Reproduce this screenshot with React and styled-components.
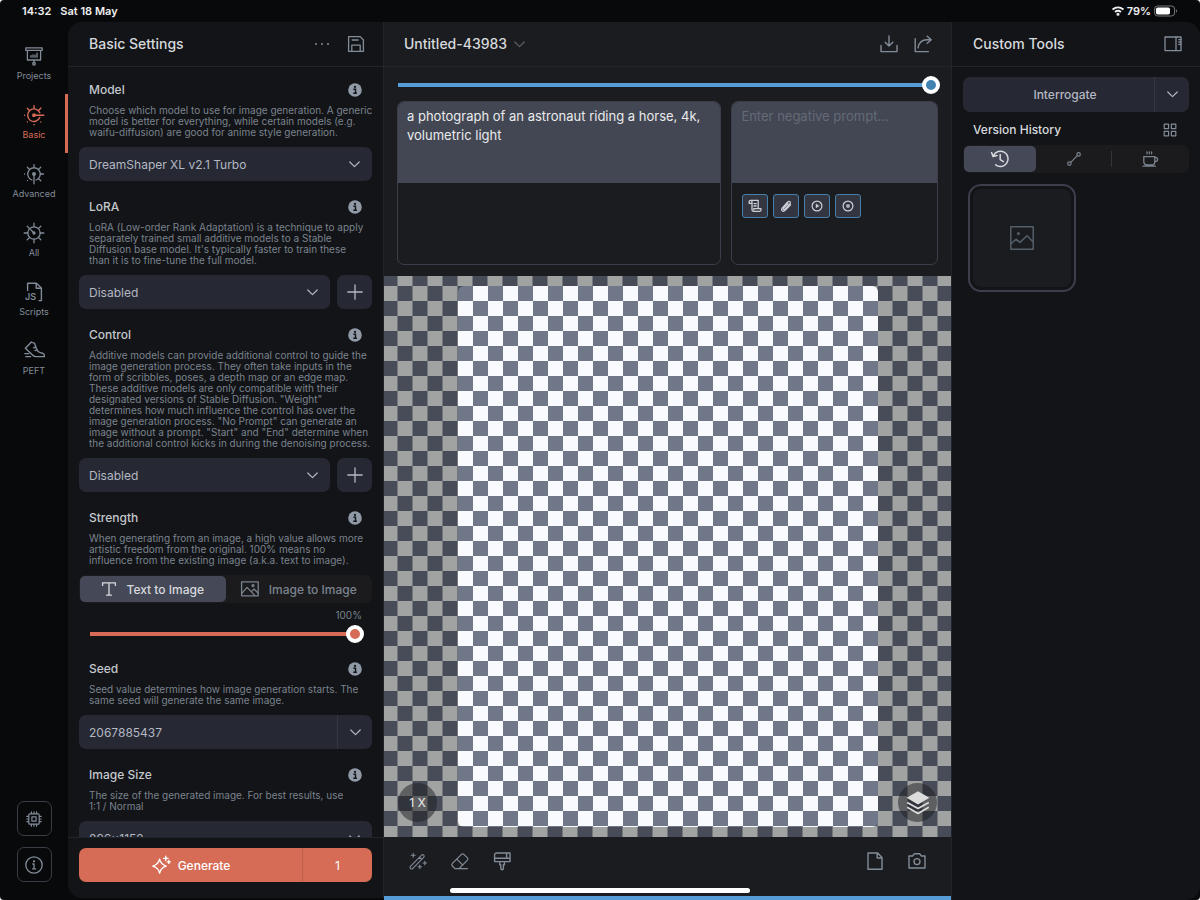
import React, { useState } from "react";
import styled, { createGlobalStyle, css } from "styled-components";

const c = {
  base: "#08090b",
  panel: "#131417",
  center: "#1b1c1f",
  line: "#22242b",
  field: "#262833",
  active: "#454857",
  prompt: "#434754",
  text: "#d7dadd",
  soft: "#b3b8c2",
  muted: "#828c98",
  dim: "#7a838e",
  coral: "#d76c56",
  blue: "#569cd6",
};

const Global = createGlobalStyle`
  * { box-sizing: border-box; }
  body { margin: 0; background: #fff; }
  body, button, input, select, textarea { font-family: Inter, "Liberation Sans", sans-serif; }
  button { border: 0; padding: 0; margin: 0; background: none; color: inherit; cursor: pointer; }
  h1, h2, h3, p { margin: 0; }
`;

const Page = styled.div`
  position: relative;
  display: flex;
  flex-direction: column;
  height: 100vh;
  overflow: hidden;
  background: ${c.base};
  color: ${c.text};
  border-radius: 4px;
`;

const StatusBar = styled.header`
  display: flex;
  align-items: center;
  justify-content: space-between;
  height: 22px;
  flex: none;
  padding: 0 22px;
  font-size: 11px;
  font-weight: 600;
  line-height: 22px;
  color: #f0f0f0;
`;
const StatusGroup = styled.div`
  display: flex;
  align-items: center;
  gap: ${(p) => p.$gap}px;
`;

const Workspace = styled.div`
  display: grid;
  grid-template-columns: 68px 316px minmax(0, 1fr) 249px;
  flex: 1;
  min-height: 0;
`;

const Nav = styled.nav`
  display: flex;
  flex-direction: column;
  padding: 13px 0 18px;
`;
const NavItem = styled.button`
  display: flex;
  flex-direction: column;
  align-items: center;
  gap: 1px;
  height: 59px;
  padding-top: 10px;
  font-size: 9px;
  line-height: 16px;
  color: ${(p) => (p.$on ? c.coral : c.muted)};
  border-right: 3px solid ${(p) => (p.$on ? c.coral : "transparent")};
  border-left: 3px solid transparent;
`;
const NavFoot = styled.div`
  display: flex;
  flex-direction: column;
  align-items: center;
  gap: 11px;
  margin-top: auto;
`;
const OutlineButton = styled.button`
  display: grid;
  place-items: center;
  width: 35px;
  height: 35px;
  border: 1px solid #3a3c46;
  border-radius: 7px;
  color: ${c.muted};
`;

const Settings = styled.aside`
  display: flex;
  flex-direction: column;
  min-height: 0;
  background: ${c.panel};
  border-right: 1px solid ${c.line};
  border-radius: 14px 0 0 14px;
  margin-bottom: 2px;
`;
const PanelHeader = styled.div`
  display: flex;
  align-items: center;
  height: 45px;
  flex: none;
  padding: 0 ${(p) => p.$right}px 0 ${(p) => p.$left || 21}px;
  gap: 14px;
  border-bottom: 1px solid ${c.line};
  color: ${c.muted};
`;
const PanelTitle = styled.h1`
  font-size: 14px;
  font-weight: 500;
  line-height: 18px;
  color: ${c.text};
`;
const Spacer = styled.div`
  flex: 1;
`;
const IconButton = styled.button`
  display: grid;
  place-items: center;
  width: 20px;
  height: 20px;
`;

const SettingsBody = styled.div`
  flex: 1;
  min-height: 0;
  overflow: hidden;
  padding: 15px 11px 0;
`;
const Section = styled.section`
  margin-bottom: 18px;
`;
const SectionHead = styled.div`
  display: flex;
  align-items: center;
  justify-content: space-between;
  height: 16px;
  padding: 0 10px;
`;
const SectionTitle = styled.h2`
  font-size: 12px;
  font-weight: 500;
  line-height: 16px;
  color: ${(p) => (p.$bright ? c.text : "#c3c8cd")};
`;
const InfoButton = styled.button`
  display: grid;
  place-items: center;
  width: 14px;
  height: 14px;
`;
const Description = styled.p`
  margin: 7px 0 9px;
  padding-left: 10px;
  font-size: 10px;
  line-height: 11px;
  white-space: pre;
  color: ${c.dim};
`;
const FieldRow = styled.div`
  display: flex;
  gap: 7px;
`;
const SelectWrap = styled.div`
  position: relative;
  flex: 1;
  height: 34px;
  svg {
    position: absolute;
    right: 12px;
    top: 14px;
    pointer-events: none;
  }
  color: ${c.soft};
`;
const Select = styled.select`
  appearance: none;
  width: 100%;
  height: 34px;
  padding: 0 10px;
  border: 0;
  border-radius: 7px;
  background: ${c.field};
  color: ${c.soft};
  font-size: 12px;
`;
const AddButton = styled.button`
  display: grid;
  place-items: center;
  width: 35px;
  height: 34px;
  border-radius: 7px;
  background: ${c.field};
  color: ${c.soft};
`;
const Split = styled.div`
  display: flex;
  height: ${(p) => p.$h || 34}px;
  border-radius: 7px;
  overflow: hidden;
  background: ${(p) => (p.$accent ? c.coral : c.field)};
  color: ${(p) => (p.$accent ? "#fff" : c.soft)};
`;
const SplitMain = styled.button`
  display: flex;
  align-items: center;
  justify-content: center;
  gap: 7px;
  flex: 1;
  padding-left: ${(p) => p.$inset || 0}px;
  font-size: 12px;
  font-weight: 500;
`;
const SplitSide = styled.button`
  display: grid;
  place-items: center;
  width: ${(p) => p.$w}px;
  font-size: 12px;
  border-left: 1px solid ${(p) => (p.$accent ? "#c0604d" : "#343641")};
`;
const SeedInput = styled.input`
  flex: 1;
  min-width: 0;
  padding: 0 10px;
  border: 0;
  background: transparent;
  color: ${c.soft};
  font-size: 12px;
`;
const Segments = styled.div`
  display: flex;
  align-items: center;
  height: 28px;
  padding: 1px;
  border-radius: 7px;
  background: #1b1b1d;
`;
const Segment = styled.button`
  display: flex;
  align-items: center;
  justify-content: center;
  gap: 9px;
  flex: ${(p) => p.$grow || 40};
  height: 26px;
  border-radius: 5px;
  font-size: 12px;
  font-weight: 500;
  color: ${c.dim};
  ${(p) =>
    p.$on &&
    css`
      background: ${c.active};
      color: ${c.text};
    `}
`;
const SegmentRule = styled.div`
  width: 1px;
  height: 16px;
  background: #34363d;
`;
const Percent = styled.output`
  display: block;
  padding: 6px 10px 0;
  font-size: 10px;
  line-height: 12px;
  text-align: right;
  color: ${c.dim};
`;
const SliderRow = styled.div`
  padding: ${(p) => p.$pad};
`;
const Range = styled.input`
  appearance: none;
  display: block;
  width: 100%;
  height: 18px;
  margin: 0;
  background: linear-gradient(${(p) => p.$color}, ${(p) => p.$color}) left center / calc(100% - 4px) 4px no-repeat;
  &::-webkit-slider-thumb {
    appearance: none;
    width: 18px;
    height: 18px;
    border: 4px solid #fff;
    border-radius: 50%;
    background: ${(p) => p.$thumb};
  }
`;
const SettingsFoot = styled.div`
  padding: 10px 11px 16px;
  border-top: 1px solid ${c.line};
`;

const Center = styled.main`
  display: flex;
  flex-direction: column;
  min-height: 0;
  background: ${c.center};
  border-bottom: 4px solid ${c.blue};
`;
const DocButton = styled.button`
  display: flex;
  align-items: center;
  gap: 7px;
  color: #566069;
`;
const Prompts = styled.div`
  display: grid;
  grid-template-columns: 325fr 207fr;
  gap: 10px;
  padding: 7px 13px 11px;
`;
const PromptBox = styled.div`
  height: 164px;
  overflow: hidden;
  border: 1px solid #3b3e4a;
  border-radius: 7px;
  background: #1b1c1f;
`;
const PromptText = styled.textarea`
  display: block;
  width: 100%;
  height: 81px;
  padding: 5px 9px;
  border: 0;
  resize: none;
  background: ${c.prompt};
  color: #e9ebec;
  font-size: 13px;
  line-height: 19px;
  &::placeholder {
    color: #646a77;
  }
`;
const Chips = styled.div`
  display: flex;
  gap: 5px;
  padding: 11px 10px;
`;
const Chip = styled.button`
  display: grid;
  place-items: center;
  width: 26px;
  height: 24px;
  border: 1px solid #4580ac;
  border-radius: 3px;
  background: #333640;
  color: #ccd0d4;
`;

const checks = (light, dark) =>
  `conic-gradient(${light} 25%, ${dark} 0 50%, ${light} 0 75%, ${dark} 0)`;
const Canvas = styled.div`
  position: relative;
  display: grid;
  justify-content: center;
  flex: 1;
  min-height: 0;
  padding: 10px 0;
  background: ${checks("#a1a3a2", "#484c58")} calc(50% + 15px) 10px / 30px 30px;
`;
const Artboard = styled.div`
  width: 420px;
  border-radius: 6px;
  background: ${checks("#f8fafd", "#707788")} 0 0 / 30px 30px;
`;
const FloatButton = styled.button`
  position: absolute;
  bottom: 15px;
  ${(p) => p.$side}: 14px;
  display: grid;
  place-items: center;
  width: 39px;
  height: 39px;
  border-radius: 50%;
  background: rgba(27, 28, 31, 0.5);
  color: #dcdcdc;
  font-size: 12px;
  font-weight: 500;
`;
const Toolbar = styled.div`
  display: flex;
  align-items: flex-start;
  gap: 22px;
  height: 59px;
  flex: none;
  padding: 14px 24px;
  color: ${c.muted};
`;
const HomeIndicator = styled.div`
  position: absolute;
  left: 50%;
  bottom: 7px;
  width: 300px;
  height: 5px;
  margin-left: -150px;
  border-radius: 3px;
  background: #fff;
  pointer-events: none;
`;

const Tools = styled.aside`
  background: ${c.panel};
  border-left: 1px solid ${c.line};
  border-radius: 0 14px 14px 0;
`;
const ToolsBody = styled.div`
  display: flex;
  flex-direction: column;
  padding: 10px 11px;
`;
const HistoryHead = styled.div`
  display: flex;
  align-items: center;
  justify-content: space-between;
  height: 33px;
  padding: 3px 9px 0 10px;
  color: ${c.muted};
`;
const Thumbnail = styled.button`
  width: 108px;
  height: 108px;
  margin: 11px 5px;
  padding: 3px;
  border: 2px solid #3d3d4c;
  border-radius: 13px;
  color: #545e68;
`;
const ThumbInner = styled.span`
  display: grid;
  place-items: center;
  height: 100%;
  border-radius: 8px;
  background: #1b1c1f;
`;

const Svg = ({ w = 20, h = w, sw = 1.2, children }) => (
  <svg width={w} height={h} viewBox={`0 0 ${w} ${h}`} fill="none" stroke="currentColor" strokeWidth={sw} strokeLinecap="round" strokeLinejoin="round" aria-hidden="true">
    {children}
  </svg>
);
const Chevron = () => (
  <Svg w={11} h={7} sw={1.2}>
    <path d="M.8 1l4.7 4.6L10.2 1" />
  </Svg>
);
const Info = () => (
  <svg width="14" height="14" viewBox="0 0 14 14" aria-hidden="true">
    <circle cx="7" cy="7" r="6.8" fill="#8f9aa6" />
    <circle cx="7" cy="3.9" r="1.1" fill={c.panel} />
    <path d="M5.4 6.2h2.1v4M5.3 10.2h3.6" stroke={c.panel} strokeWidth="1.4" fill="none" />
  </svg>
);
const Presentation = () => (
  <Svg w={22} sw={1.3}>
    <path d="M2.8 2.9h16.4v2.4H2.8zM4.4 5.5V15h13.2V5.5M11 15v2.6" />
    <path d="M8 12.2v-1.6M10 12.2V9.8M12 12.2v-2M14 12.2V8.2" />
    <circle cx="11" cy="18.8" r="1.3" />
  </Svg>
);
const GaugeRight = () => (
  <Svg w={22} sw={1.4}>
    <path d="M16.8 8.8A6.3 6.3 0 1 0 16.8 13.6M11 11.2h9.8M11 4.8V1.6M15.6 6.4l2.3-2.3M6.4 6.4L4.3 4.3" />
    <circle cx="11" cy="11.2" r="1.2" fill="currentColor" />
    <path d="M1.5 11.2h.1M4.3 17.9h.1M11 20.7h.1M17.8 17.9h.1" />
  </Svg>
);
const GaugeDown = () => (
  <Svg w={22} sw={1.3}>
    <path d="M8.9 17A6.3 6.3 0 1 1 13.1 17M11 11v9.8M11 4.7V1.6M15.5 6.5l2.2-2.2M6.5 6.5L4.3 4.3M17.4 11h3M15.6 15.6l2.2 2.2" />
    <circle cx="11" cy="11" r="1.3" fill="currentColor" />
    <path d="M1.5 11h.1M4.4 17.6h.1" />
  </Svg>
);
const GaugeAll = () => (
  <Svg w={22} sw={1.3}>
    <circle cx="11" cy="11" r="6.2" />
    <circle cx="11" cy="11" r="1" fill="currentColor" />
    <path d="M11 11L7.8 7.8M11 4.8V1.2M11 20.8v-3.6M1.2 11h3.6M17.2 11h3.6M15.4 6.6l2.4-2.4M6.6 6.6L4.2 4.2M6.6 15.4l-2.4 2.4M15.4 15.4l2.4 2.4" />
  </Svg>
);
const ScriptFile = () => (
  <Svg w={22} sw={1.4}>
    <path d="M4.6 9.5V2.2h8.8l5 4.8v12.6h-2.4M13.2 2.4v4.8h5" />
    <text x="2" y="19.4" fontSize="9" fontWeight="600" stroke="none" fill="currentColor">JS</text>
  </Svg>
);
const Sneaker = () => (
  <Svg w={22} sw={1.4}>
    <path d="M2.4 8.2L8.4 2c.8.6 1.6 1 2.8 1 .6 0 1.2 3 2.6 6.4.6 1.6 1.6 2.8 3.4 3.2l2.4.6c1.2.4 1.9 1.6 1.8 3.4H12.8c-1.4 0-2.2-.5-3-1.4zM12.8 7l-2.2.8M14.2 9.8l-2.2.8M1.8 13.6h4M2.8 16.6h4.8" />
  </Svg>
);
const Processor = () => (
  <Svg w={18}>
    <rect x="3.8" y="3.8" width="10.4" height="10.4" rx="1" />
    <rect x="6.9" y="6.9" width="4.2" height="4.2" />
    <path d="M6.4 3.6V1.8M9 3.6V1.8M11.6 3.6V1.8M6.4 16.2v-1.8M9 16.2v-1.8M11.6 16.2v-1.8M3.6 6.4H1.8M3.6 9H1.8M3.6 11.6H1.8M16.2 6.4h-1.8M16.2 9h-1.8M16.2 11.6h-1.8" />
  </Svg>
);
const InfoOutline = () => (
  <Svg w={20} sw={1.3}>
    <circle cx="10" cy="10" r="8.2" />
    <circle cx="10" cy="6.3" r=".5" fill="currentColor" />
    <path d="M8.8 9H10v4.8M8.6 13.9h3" />
  </Svg>
);
const Dots = () => (
  <svg width="16" height="4" viewBox="0 0 16 4" fill="currentColor" aria-hidden="true">
    <circle cx="2" cy="2" r="1" />
    <circle cx="8" cy="2" r="1" />
    <circle cx="14" cy="2" r="1" />
  </svg>
);
const Save = () => (
  <Svg w={18} sw={1.3}>
    <path d="M1.6 1.6h11.6l3.2 3.4v11.4H1.6zM5.2 5h6M4.8 16.2v-6h8.4v6" />
  </Svg>
);
const Plus = () => (
  <Svg w={16} sw={1.3}>
    <path d="M8 .8v14.4M.8 8h14.4" />
  </Svg>
);
const LetterT = () => (
  <Svg w={16} sw={1.3}>
    <path d="M1.6 4.4V1.8h12.8v2.6M8 1.8v12.4M5.6 14.2h4.8" />
  </Svg>
);
const Picture = () => (
  <Svg w={20} sw={1.3}>
    <rect x="1.6" y="2.8" width="16.6" height="14" />
    <circle cx="13" cy="6.6" r="1" />
    <path d="M1.8 14.4L7 8.4l7.8 8M11.4 12.6l2.6-2.6 4 4" />
  </Svg>
);
const Sparkles = () => (
  <Svg w={20} sw={1.4}>
    <path d="M8.6 4.2c.9 3.9 2.8 5.8 6.6 6.9-3.8 1.1-5.7 3-6.6 6.9-.9-3.9-2.8-5.8-6.8-6.9 4-1.1 5.9-3 6.8-6.9zM14.8 1.2v4.4M12.6 3.4H17M17.8 5.4v3M16.3 6.9h3" />
  </Svg>
);
const Download = () => (
  <Svg w={20} sw={1.4}>
    <path d="M2 11.4v6.2h16v-6.2M10 2v10M6.2 8.2L10 12l3.8-3.8" />
  </Svg>
);
const Share = () => (
  <Svg w={20} sw={1.4}>
    <path d="M2.2 4.6v13h13.2M5 13.8c.8-5 4-8 9-8.1h4M14.2 2.2l4 3.5-4 3.6" />
  </Svg>
);
const Scroll = () => (
  <Svg w={14} sw={1.3}>
    <path d="M3.4 4.4H1.2V2.8C1.2 1.9 1.8 1.4 2.6 1.4h7.6v8M2.6 1.4c.9 0 1.4.6 1.4 1.4v8c0 .9.6 1.5 1.4 1.5h6.4c.8 0 1.2-.7 1.2-1.5V9.6H5.8v1.2M6 4.6h2.2M6 7h2.2" />
  </Svg>
);
const Clip = () => (
  <Svg w={14} sw={1.2}>
    <path d="M11.6 5.8L6.2 11.4c-2.3 2.2-5-.4-2.9-2.6L8.7 3c1.6-1.6 3.7.4 2.1 2L5.6 10.4c-.8.8-2-.3-1.2-1.1l4.6-4.8" />
  </Svg>
);
const Play = () => (
  <Svg w={14}>
    <circle cx="7" cy="7" r="4.9" />
    <path d="M6 5.1v3.8L9 7z" fill="currentColor" strokeWidth=".4" />
  </Svg>
);
const Stop = () => (
  <Svg w={14}>
    <circle cx="7" cy="7" r="4.9" />
    <rect x="5.2" y="5.2" width="3.6" height="3.6" rx="1" fill="currentColor" stroke="none" opacity=".8" />
  </Svg>
);
const SidePanel = () => (
  <Svg w={18} sw={1.3}>
    <rect x="1" y="2" width="16" height="13.6" />
    <path d="M12 2v13.6M14.8 4.6H17M14.8 7H17M14.8 9.4H17" />
  </Svg>
);
const Tiles = () => (
  <Svg w={14}>
    <path d="M1.2 1.2h4.4v4.4H1.2zM8.4 1.2h4.4v4.4H8.4zM1.2 8.4h4.4v4.4H1.2zM8.4 8.4h4.4v4.4H8.4z" />
  </Svg>
);
const History = () => (
  <Svg w={20} sw={1.5}>
    <path d="M3.4 6.6A7.7 7.7 0 1 1 5.6 15.9M1.6 3.6l1.4 4 4-1M10.2 5.6v5l3.2 2" />
  </Svg>
);
const Nodes = () => (
  <Svg w={16}>
    <circle cx="3.4" cy="12.6" r="1.7" />
    <circle cx="12.6" cy="3.4" r="1.7" />
    <path d="M4.7 11.3l6.6-6.6" />
  </Svg>
);
const Coffee = () => (
  <Svg w={18} sw={1.3}>
    <path d="M2.8 6.6h11v4.8c0 2.2-1.2 3.6-3.2 3.6H6c-2 0-3.2-1.4-3.2-3.6zM13.8 7.4h1c2.4 0 2.4 4.2-.4 4.2M2 16.2h12.4M6 1.8v2M8.3 1.8v2M10.6 1.8v2" />
  </Svg>
);
const Placeholder = () => (
  <Svg w={26} sw={1.5}>
    <rect x="1.8" y="1.8" width="22.4" height="22.4" />
    <circle cx="9.4" cy="8.6" r=".8" fill="currentColor" />
    <path d="M2 18.8l5-4.6 4 3.2 7-6.6 6 6" />
  </Svg>
);
const Wand = () => (
  <Svg w={20} sw={1.1}>
    <path d="M2.2 15.6L13.6 4.2c.6-.6 1.5-.6 2.1 0s.6 1.5 0 2.1L4.4 17.8c-1.4.8-3-.8-2.2-2.2zM11.6 6.4l2.1 2.1M5.2 2.2v4M3.2 4.2h4M11.8 14v3.6M10 15.8h3.6M16.8 10.2v3.6M15 12h3.6" />
  </Svg>
);
const Eraser = () => (
  <Svg w={20} sw={1.2}>
    <path d="M2.4 12.4l8.8-8.8c1-1 2-1 3 0l3 3c.9.9.9 1.9 0 2.8l-8.2 8.2H5l-2.6-2.6c-.8-.8-.8-1.8 0-2.6zM6.8 8.2l6 6M9 17.6h8.4" />
  </Svg>
);
const PaintBrush = () => (
  <Svg w={20} sw={1.4}>
    <path d="M2.6 3.2L4 2h14v8.6H2.6zM2.6 7.2H18M14.6 2v4M7.8 10.8v3h1v3.4c0 2 2.6 2 2.6 0v-3.4h1v-3" />
  </Svg>
);
const BlankPage = () => (
  <Svg w={20} sw={1.4}>
    <path d="M3 2h9.6L17 6.6v11.6H3zM12.2 2.2V7H17" />
  </Svg>
);
const Camera = () => (
  <Svg w={20} sw={1.4}>
    <path d="M2 5h3.6l1.6-2.2h5.6L14.4 5H18v12H2z" />
    <circle cx="10" cy="10.6" r="3" />
  </Svg>
);
const Layers = () => (
  <Svg w={26} sw={1.7}>
    <path d="M13 1.2L24.4 7.8 13 14.6 1.6 7.8z" fill="currentColor" stroke="none" />
    <path d="M2.2 12.4L13 18.6l10.8-6.2M2.2 17.2L13 23.4l10.8-6.2" strokeLinecap="butt" />
  </Svg>
);
const Wifi = () => (
  <Svg w={12} h={10} sw={1.9}>
    <path d="M.6 3.6c3.2-2.8 7.6-2.8 10.8 0M3 6c1.9-1.5 4.1-1.5 6 0" strokeLinecap="butt" />
    <circle cx="6" cy="8.2" r=".6" fill="currentColor" />
  </Svg>
);
const Battery = () => (
  <svg width="24" height="12" viewBox="0 0 24 12" aria-hidden="true">
    <rect x=".6" y="1" width="20" height="10" rx="3" fill="none" stroke="#77787a" />
    <rect x="2" y="2.5" width="14" height="7" rx="1.8" fill="#fff" />
    <path d="M22 4.3c1.4.6 1.4 2.8 0 3.4z" fill="#77787a" />
  </svg>
);

const navItems = [
  ["Projects", Presentation],
  ["Basic", GaugeRight],
  ["Advanced", GaugeDown],
  ["All", GaugeAll],
  ["Scripts", ScriptFile],
  ["PEFT", Sneaker],
];

const copy = {
  Model: `Choose which model to use for image generation. A generic
model is better for everything, while certain models (e.g.
waifu-diffusion) are good for anime style generation.`,
  LoRA: `LoRA (Low-order Rank Adaptation) is a technique to apply
separately trained small additive models to a Stable
Diffusion base model. It's typically faster to train these
than it is to fine-tune the full model.`,
  Control: `Additive models can provide additional control to guide the
image generation process. They often take inputs in the
form of scribbles, poses, a depth map or an edge map.
These additive models are only compatible with their
designated versions of Stable Diffusion. "Weight"
determines how much influence the control has over the
image generation process. "No Prompt" can generate an
image without a prompt. "Start" and "End" determine when
the additional control kicks in during the denoising process.`,
  Strength: `When generating from an image, a high value allows more
artistic freedom from the original. 100% means no
influence from the existing image (a.k.a. text to image).`,
  Seed: `Seed value determines how image generation starts. The
same seed will generate the same image.`,
  "Image Size": `The size of the generated image. For best results, use
1:1 / Normal`,
};

const Setting = ({ name, children }) => (
  <Section>
    <SectionHead>
      <SectionTitle>{name}</SectionTitle>
      <InfoButton aria-label={`About ${name}`}><Info /></InfoButton>
    </SectionHead>
    <Description>{copy[name]}</Description>
    {children}
  </Section>
);
const Dropdown = ({ label, value }) => (
  <SelectWrap>
    <Select aria-label={label} defaultValue={value}>
      <option>{value}</option>
    </Select>
    <Chevron />
  </SelectWrap>
);

export default function App() {
  const [tab, setTab] = useState("Basic");
  const [mode, setMode] = useState("text");
  const [view, setView] = useState("history");
  return (
    <>
      <Global />
      <Page>
        <StatusBar>
          <StatusGroup $gap={9}>
            <span>14:32</span>
            <span>Sat 18 May</span>
          </StatusGroup>
          <StatusGroup $gap={3}>
            <Wifi />
            <span>79%</span>
            <Battery />
          </StatusGroup>
        </StatusBar>
        <Workspace>
          <Nav>
            {navItems.map(([label, Icon]) => (
              <NavItem key={label} $on={tab === label} onClick={() => setTab(label)}>
                <Icon />
                {label}
              </NavItem>
            ))}
            <NavFoot>
              <OutlineButton aria-label="Hardware"><Processor /></OutlineButton>
              <OutlineButton aria-label="Information"><InfoOutline /></OutlineButton>
            </NavFoot>
          </Nav>

          <Settings>
            <PanelHeader $right={17}>
              <PanelTitle>Basic Settings</PanelTitle>
              <Spacer />
              <IconButton aria-label="More"><Dots /></IconButton>
              <IconButton aria-label="Save"><Save /></IconButton>
            </PanelHeader>
            <SettingsBody>
              <Setting name="Model">
                <Dropdown label="Model" value="DreamShaper XL v2.1 Turbo" />
              </Setting>
              <Setting name="LoRA">
                <FieldRow>
                  <Dropdown label="LoRA" value="Disabled" />
                  <AddButton aria-label="Add LoRA"><Plus /></AddButton>
                </FieldRow>
              </Setting>
              <Setting name="Control">
                <FieldRow>
                  <Dropdown label="Control" value="Disabled" />
                  <AddButton aria-label="Add control"><Plus /></AddButton>
                </FieldRow>
              </Setting>
              <Setting name="Strength">
                <Segments>
                  <Segment $on={mode === "text"} onClick={() => setMode("text")}>
                    <LetterT />
                    Text to Image
                  </Segment>
                  <Segment $on={mode === "image"} onClick={() => setMode("image")}>
                    <Picture />
                    Image to Image
                  </Segment>
                </Segments>
                <Percent>100%</Percent>
                <SliderRow $pad="4px 8px 0 11px">
                  <Range type="range" aria-label="Strength" defaultValue="100" $color={c.coral} $thumb={c.coral} />
                </SliderRow>
              </Setting>
              <Setting name="Seed">
                <Split>
                  <SeedInput aria-label="Seed" defaultValue="2067885437" />
                  <SplitSide $w={35} aria-label="Seed options"><Chevron /></SplitSide>
                </Split>
              </Setting>
              <Setting name="Image Size">
                <Dropdown label="Image Size" value="896x1152" />
              </Setting>
            </SettingsBody>
            <SettingsFoot>
              <Split $accent>
                <SplitMain><Sparkles />Generate</SplitMain>
                <SplitSide $accent $w={70}>1</SplitSide>
              </Split>
            </SettingsFoot>
          </Settings>

          <Center>
            <PanelHeader $left={20} $right={18}>
              <DocButton>
                <PanelTitle as="span">Untitled-43983</PanelTitle>
                <Chevron />
              </DocButton>
              <Spacer />
              <IconButton aria-label="Download"><Download /></IconButton>
              <IconButton aria-label="Share"><Share /></IconButton>
            </PanelHeader>
            <SliderRow $pad="9px 11px 0 14px">
              <Range type="range" aria-label="History position" defaultValue="100" $color={c.blue} $thumb="#4282b0" />
            </SliderRow>
            <Prompts>
              <PromptBox>
                <PromptText aria-label="Prompt" defaultValue="a photograph of an astronaut riding a horse, 4k, volumetric light" />
              </PromptBox>
              <PromptBox>
                <PromptText aria-label="Negative prompt" placeholder="Enter negative prompt..." />
                <Chips>
                  <Chip aria-label="Prompt library"><Scroll /></Chip>
                  <Chip aria-label="Attach"><Clip /></Chip>
                  <Chip aria-label="Play"><Play /></Chip>
                  <Chip aria-label="Stop"><Stop /></Chip>
                </Chips>
              </PromptBox>
            </Prompts>
            <Canvas>
              <Artboard />
              <FloatButton $side="left">1 X</FloatButton>
              <FloatButton $side="right" aria-label="Layers"><Layers /></FloatButton>
            </Canvas>
            <Toolbar>
              <IconButton aria-label="Magic wand"><Wand /></IconButton>
              <IconButton aria-label="Eraser"><Eraser /></IconButton>
              <IconButton aria-label="Paint"><PaintBrush /></IconButton>
              <Spacer />
              <IconButton aria-label="New page"><BlankPage /></IconButton>
              <IconButton aria-label="Camera"><Camera /></IconButton>
            </Toolbar>
          </Center>

          <Tools>
            <PanelHeader $left={21} $right={17}>
              <PanelTitle as="h2">Custom Tools</PanelTitle>
              <Spacer />
              <IconButton aria-label="Toggle panel"><SidePanel /></IconButton>
            </PanelHeader>
            <ToolsBody>
              <Split $h={35}>
                <SplitMain $inset={13}>Interrogate</SplitMain>
                <SplitSide $w={35} aria-label="More tools"><Chevron /></SplitSide>
              </Split>
              <HistoryHead>
                <SectionTitle as="h3" $bright>Version History</SectionTitle>
                <IconButton aria-label="Grid view"><Tiles /></IconButton>
              </HistoryHead>
              <Segments>
                <Segment aria-label="History" $grow={38} $on={view === "history"} onClick={() => setView("history")}><History /></Segment>
                <Segment aria-label="Nodes" onClick={() => setView("nodes")} $on={view === "nodes"}><Nodes /></Segment>
                <SegmentRule />
                <Segment aria-label="Coffee" $on={view === "coffee"} onClick={() => setView("coffee")}><Coffee /></Segment>
              </Segments>
              <Thumbnail aria-label="Current version">
                <ThumbInner><Placeholder /></ThumbInner>
              </Thumbnail>
            </ToolsBody>
          </Tools>
        </Workspace>
        <HomeIndicator />
      </Page>
    </>
  );
}
